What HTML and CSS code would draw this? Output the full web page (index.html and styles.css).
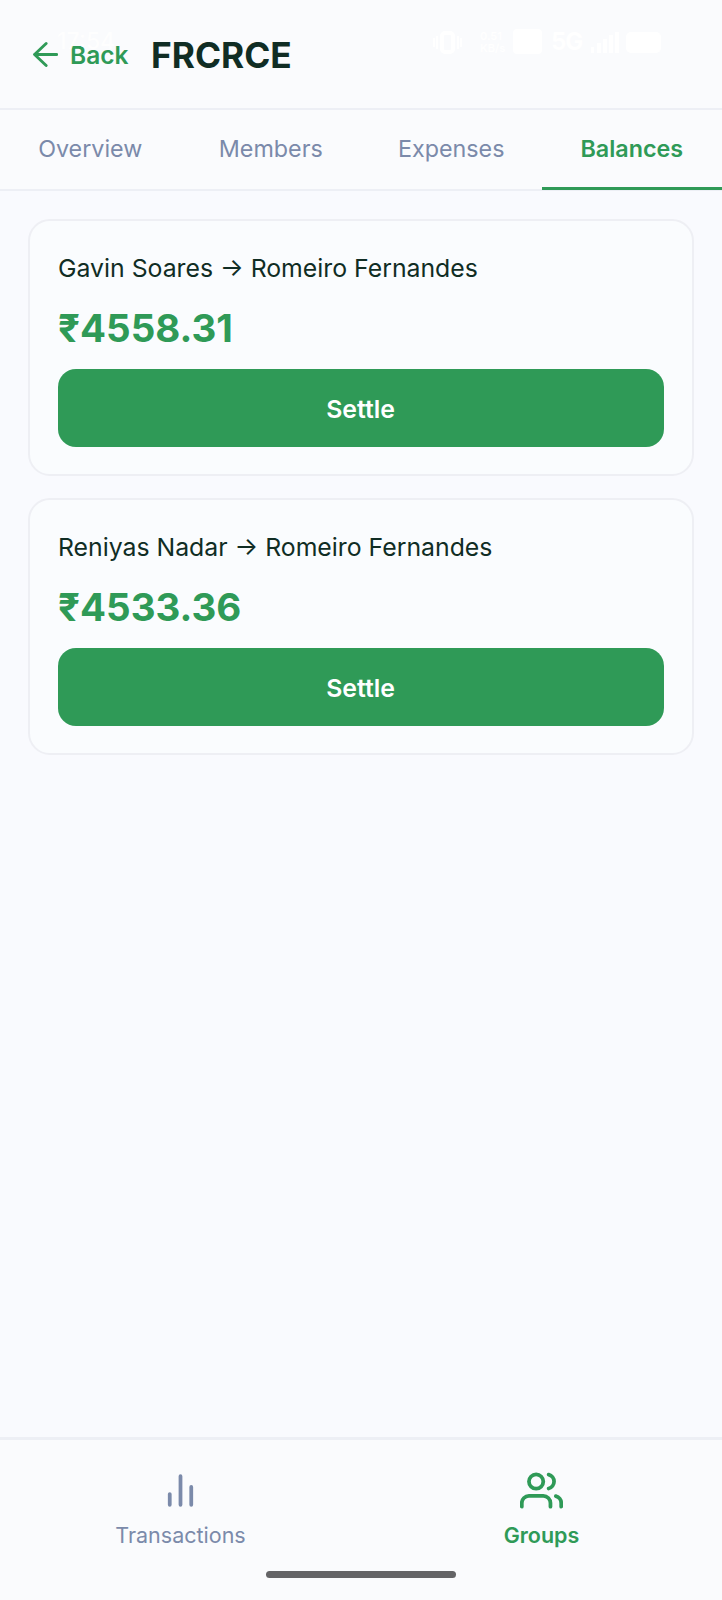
FILE: index.html
```html
<!DOCTYPE html>
<html lang="en">
<head>
<meta charset="utf-8">
<title>FRCRCE</title>
<link rel="stylesheet" href="styles.css">
</head>
<body>
<div class="app">
  <header class="header">
    <a class="back">
      <svg class="back-icon" viewBox="0 0 24 24"><path d="M22.7 12H1.5M12.6 1.5L1.5 12L12.6 22.5"/></svg>
      <span>Back</span>
    </a>
    <h1 class="title">FRCRCE</h1>
    <div class="status">
      <span class="time">17:54</span>
      <svg class="status-icons" viewBox="0 0 234 30">
        <rect x="10" y="4" width="11" height="19" rx="3" fill="none" stroke="#fff" stroke-width="4"/>
        <path d="M2 9v9M5 7v13M26 7v13M29 9v9" stroke="#fff" stroke-width="2"/>
        <rect x="81" y="0" width="29" height="25" rx="4"/>
        <path d="M159 18h3v6h-3zM165 14h4v10h-4zM171 10h4v14h-4zM177 6h4v18h-4zM183 3h4v21h-4z"/>
        <rect x="194" y="3" width="35" height="21" rx="5"/>
      </svg>
      <span class="speed">0.51<br>KB/s</span>
      <span class="network">5G</span>
    </div>
  </header>
  <nav class="tabs">
    <a class="tab">Overview</a>
    <a class="tab">Members</a>
    <a class="tab">Expenses</a>
    <a class="tab active">Balances</a>
  </nav>
  <main class="content">
    <section class="card">
      <p class="names">Gavin Soares → Romeiro Fernandes</p>
      <p class="amount">₹4558.31</p>
      <button class="settle">Settle</button>
    </section>
    <section class="card">
      <p class="names">Reniyas Nadar → Romeiro Fernandes</p>
      <p class="amount">₹4533.36</p>
      <button class="settle">Settle</button>
    </section>
  </main>
  <nav class="bottom-nav">
    <a class="nav-item">
      <svg class="nav-icon" viewBox="0 0 24 24"><path d="M18 20V10M12 20V4M6 20v-6"/></svg>
      <span>Transactions</span>
    </a>
    <a class="nav-item active">
      <svg class="nav-icon" viewBox="0 0 24 24"><path d="M17 21v-2a4 4 0 0 0-4-4H5a4 4 0 0 0-4 4v2"/><circle cx="9" cy="7" r="4"/><path d="M23 21v-2a4 4 0 0 0-3-3.87M16 3.13a4 4 0 0 1 0 7.75"/></svg>
      <span>Groups</span>
    </a>
    <div class="home-bar"></div>
  </nav>
</div>
</body>
</html>
```
FILE: styles.css
```css
* { box-sizing: border-box; }
body { margin: 0; background: #f9fafe; font-family: Inter, sans-serif; color: #102d24; }
svg { display: block; }
.app { height: 1600px; display: flex; flex-direction: column; }
.header { position: relative; height: 110px; flex: none; display: flex; align-items: center; padding: 0 33px; background: #fafbfd; border-bottom: 2px solid #edeff5; }
.back { display: flex; align-items: center; gap: 12px; color: #2f9a57; font-size: 24.5px; font-weight: 600; width: 118px; }
.back-icon { width: 25px; height: 25px; fill: none; stroke: #2f9a57; stroke-width: 2.8; stroke-linecap: round; stroke-linejoin: round; }
.back span { padding-top: 1px; }
.title { margin: 0; padding-top: 3px; font-size: 35.3px; font-weight: 700; line-height: 44px; }
.status { position: absolute; inset: 0; color: #fff; fill: #fff; }
.time { position: absolute; left: 57px; top: 27px; font-size: 23px; line-height: 28px; font-weight: 500; opacity: .8; }
.status-icons { position: absolute; left: 432px; top: 29px; width: 234px; height: 30px; }
.speed { position: absolute; left: 480px; top: 30px; font-size: 11px; line-height: 12px; font-weight: 600; }
.network { position: absolute; left: 551px; top: 28px; font-size: 24px; line-height: 28px; font-weight: 700; letter-spacing: -1px; }
.tabs { height: 81px; flex: none; display: grid; grid-template-columns: repeat(4, 1fr); background: #fafbfd; border-bottom: 2px solid #edeff5; }
.tab { display: flex; align-items: center; justify-content: center; font-size: 23.3px; color: #7b8aaa; padding-bottom: 3px; }
.tab.active { color: #2f9a57; font-weight: 600; border-bottom: 3px solid #2f9a57; margin-bottom: -1px; padding: 0; }
.content { flex: 1; padding: 28px; display: flex; flex-direction: column; gap: 22px; }
.card { height: 257px; background: #fafcfe; border: 2px solid #eeeff4; border-radius: 22px; padding: 28px; display: flex; flex-direction: column; }
.names { margin: 0 0 14px; font-size: 24.8px; line-height: 38px; }
.amount { margin: 0 0 14px; font-size: 38.5px; line-height: 54px; font-weight: 700; color: #2f9a57; }
.settle { height: 78px; flex: none; border: 0; border-radius: 18px; background: #2f9a57; color: #fff; font: 600 24.8px Inter, sans-serif; padding: 1px 1px 0 0; }
.bottom-nav { position: relative; height: 163px; flex: none; display: grid; grid-template-columns: 1fr 1fr; background: #fafbfd; border-top: 3px solid #edeff5; padding-top: 29px; }
.nav-item { display: flex; flex-direction: column; align-items: center; gap: 9px; font-size: 21.5px; line-height: 28px; color: #7b8aaa; }
.nav-item.active { color: #2f9a57; font-weight: 600; }
.nav-icon { width: 43px; height: 43px; fill: none; stroke: currentColor; stroke-width: 2.1; stroke-linecap: round; stroke-linejoin: round; }
.home-bar { position: absolute; left: 266px; bottom: 22px; width: 190px; height: 7px; border-radius: 4px; background: #646466; }
```
